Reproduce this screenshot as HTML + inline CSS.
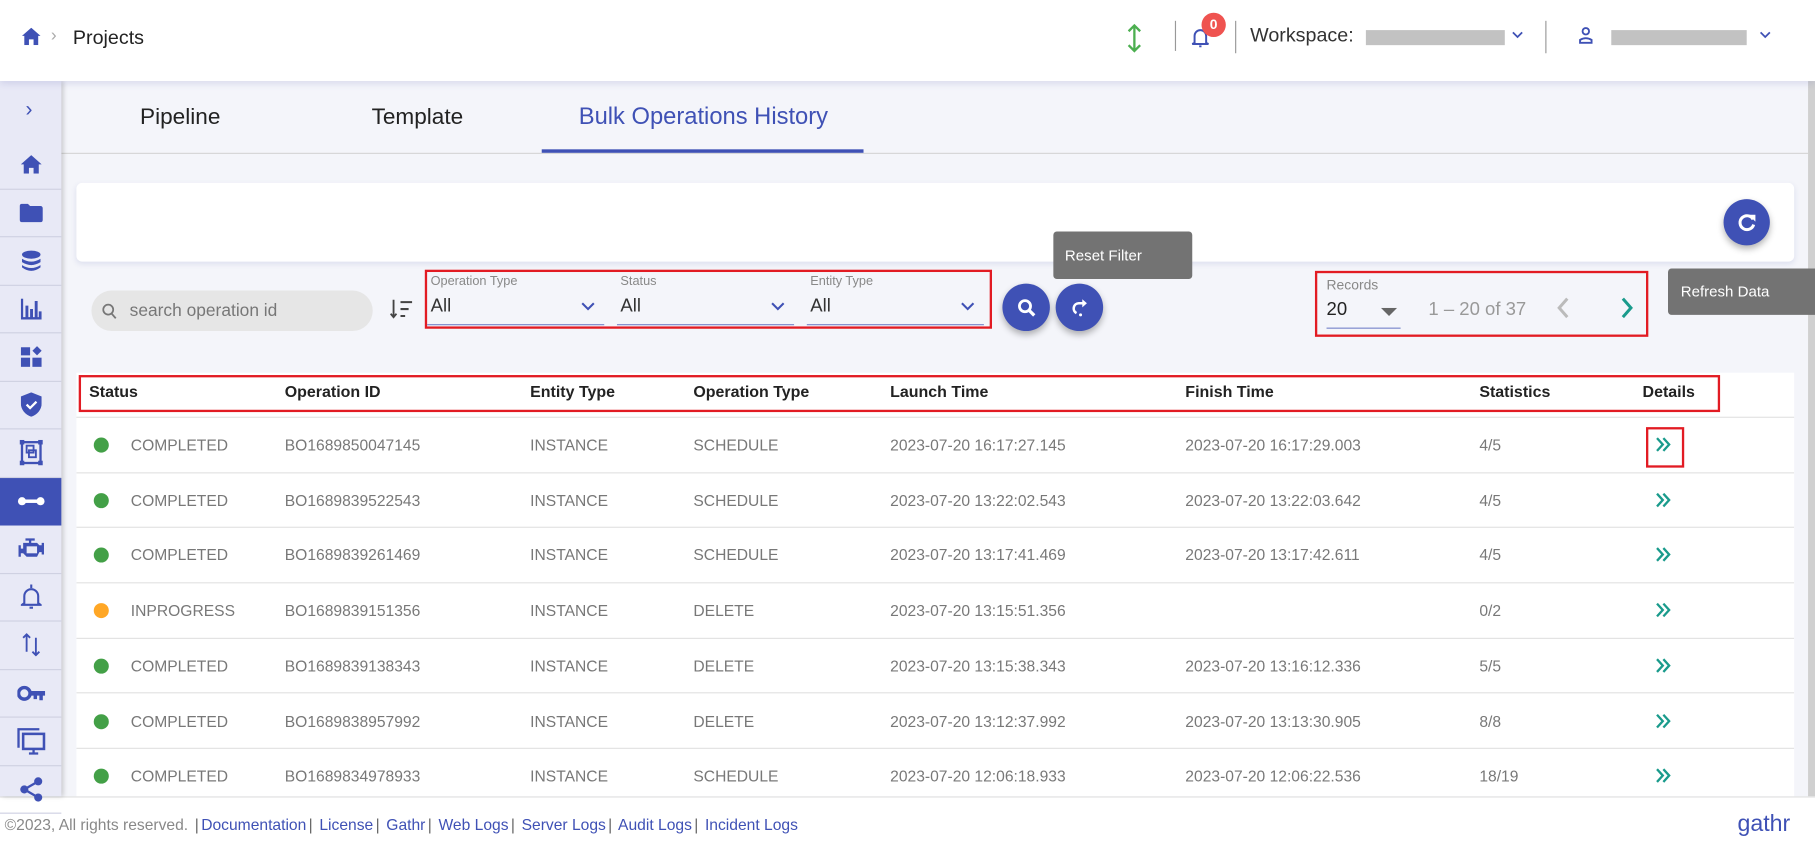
<!DOCTYPE html>
<html><head><meta charset="utf-8">
<style>
html,body{margin:0;padding:0;width:1815px;height:854px;overflow:hidden;background:#fff}
#w{position:absolute;left:0;top:0;width:1568px;height:738px;transform:scale(1.15753);transform-origin:0 0;font-family:"Liberation Sans",sans-serif;background:#f4f5fa;overflow:hidden}
.a{position:absolute}
.hdr{left:0;top:0;width:1568px;height:70px;background:#fff;box-shadow:0 2px 6px rgba(60,70,160,.15);z-index:3}
.side{left:0;top:70px;width:53px;height:618px;background:#e8e9f6;box-shadow:2px 0 4px rgba(0,0,0,.18);z-index:2}
.si{position:absolute;left:0;width:53px;height:41.5px;border-bottom:1px solid #cfd1e2;box-sizing:border-box;display:flex;align-items:center;justify-content:center}
.t{font-size:19.5px;color:#222;top:90px}
.card{left:66px;top:158px;width:1484px;height:68px;background:#fff;border-radius:5px;box-shadow:0 2px 5px rgba(60,70,160,.12)}
.circ{border-radius:50%;background:#3f51b5;box-shadow:0 3px 6px rgba(0,0,0,.3);display:flex;align-items:center;justify-content:center}
.tip{background:#737373;color:#fff;font-size:13px;border-radius:3px}
.sel{position:absolute;top:0;height:50px;width:150px}
.sel .l{position:absolute;top:3px;left:3px;font-size:11px;color:#888}
.sel .v{position:absolute;top:22px;left:3px;font-size:16px;color:#333}
.sel .u{position:absolute;left:0;right:0;top:46px;height:1px;background:#7986cb}
.sel svg{position:absolute;right:8px;top:27px}
.tbl{left:66px;top:322px;width:1484px;height:366px;background:#fff}
.row{position:absolute;left:0;width:1484px;height:47.7px;border-bottom:1px solid #e2e2e2;font-size:13.5px;color:#787878}
.row span,.hd span{position:absolute;top:17px;white-space:nowrap}
.hd{position:absolute;left:0;top:0;width:1484px;height:38px;border-bottom:1px solid #e2e2e2;font-size:13.8px;font-weight:bold;color:#222}
.hd span{top:9px}
.dot{position:absolute;left:15px;top:18px;width:13px;height:13px;border-radius:50%;background:#43a047}
.ch{position:absolute;left:1364px;top:17px}
.ft{left:0;top:688px;width:1568px;height:50px;background:#fff;border-top:1px solid #e0e0e0;font-size:13.5px}
.ft a{color:#3f51b5;text-decoration:none}
.ft .s{color:#666;margin:0 2px}
</style></head><body><div id="w">
<div class="a hdr">
 <svg class="a" style="left:19px;top:24px" width="16" height="15" viewBox="0 0 16 15"><path d="M8 0L0 7h2v8h4v-5h4v5h4V7h2z" fill="#3f51b5"/></svg>
 <div class="a" style="left:44px;top:22px;color:#aaa;font-size:15px">›</div>
 <div class="a" style="left:63px;top:23px;font-size:17px;color:#222">Projects</div>
 <svg class="a" style="left:972px;top:20px" width="16" height="26" viewBox="0 0 16 26"><path d="M8 2v22M3 7l5-5 5 5M3 19l5 5 5-5" stroke="#4caf50" stroke-width="2" fill="none"/></svg>
 <div class="a" style="left:1015px;top:18px;width:1px;height:26px;background:#999"></div>
 <svg class="a" style="left:1029px;top:20px" width="16" height="24" viewBox="0 0 16 24"><path d="M3 17V11a5 5 0 0 1 10 0v6l2 1H1z M7 20h2" stroke="#3f51b5" stroke-width="1.7" fill="none"/></svg>
 <div class="a" style="left:1038px;top:11px;width:21px;height:21px;border-radius:50%;background:#ef5350;color:#fff;font-size:12px;font-weight:bold;text-align:center;line-height:21px">0</div>
 <div class="a" style="left:1067px;top:18px;width:1px;height:28px;background:#999"></div>
 <div class="a" style="left:1080px;top:21px;font-size:17px;color:#333">Workspace:</div>
 <div class="a" style="left:1180px;top:26px;width:120px;height:13px;background:#c2c2c2"></div>
 <svg class="a" style="left:1306px;top:27px" width="10" height="7"><path d="M1 1l4 4 4-4" stroke="#3f51b5" stroke-width="1.5" fill="none"/></svg>
 <div class="a" style="left:1335px;top:18px;width:1px;height:28px;background:#999"></div>
 <svg class="a" style="left:1364px;top:23px" width="12" height="16" viewBox="0 0 12 16"><circle cx="6" cy="4" r="2.8" stroke="#3f51b5" stroke-width="1.6" fill="none"/><path d="M1 14v-2.5q5-3 10 0V14z" stroke="#3f51b5" stroke-width="1.6" fill="none"/></svg>
 <div class="a" style="left:1392px;top:26px;width:117px;height:13px;background:#c2c2c2"></div>
 <svg class="a" style="left:1520px;top:27px" width="10" height="7"><path d="M1 1l4 4 4-4" stroke="#3f51b5" stroke-width="1.5" fill="none"/></svg>
</div>

<div class="a side">
 <div class="a" style="left:22px;top:14px;color:#3f51b5;font-size:18px">›</div>
 <div class="si" style="top:52px"><svg width="18" height="16" viewBox="0 0 18 16"><path d="M9 0L0 8h2.5v8h4.5v-5h4v5h4.5V8H18z" fill="#3f51b5"/></svg></div>
 <div class="si" style="top:93.5px"><svg width="20" height="16"><path d="M0 2a2 2 0 0 1 2-2h5l2 2h9a2 2 0 0 1 2 2v10a2 2 0 0 1-2 2H2a2 2 0 0 1-2-2z" fill="#3f51b5"/></svg></div>
 <div class="si" style="top:135px"><svg width="18" height="19"><ellipse cx="9" cy="4" rx="8" ry="3.5" fill="#3f51b5"/><path d="M1 7.5q8 5 16 0v3q-8 5-16 0zM1 13q8 5 16 0v2q-8 6-16 0z" fill="#3f51b5"/></svg></div>
 <div class="si" style="top:176.5px"><svg width="18" height="18"><path d="M0 0h2v16h16v2H0zM4 6h2.5v10H4zM8 9h2.5v7H8zM12 2h2.5v14H12zM15.5 11H18v5h-2.5z" fill="#3f51b5"/></svg></div>
 <div class="si" style="top:218px"><svg width="18" height="18"><rect x="0" y="1" width="8" height="7" fill="#3f51b5"/><rect x="0" y="10" width="8" height="8" fill="#3f51b5"/><rect x="10" y="10" width="8" height="8" fill="#3f51b5"/><path d="M14 0l4 4-4 4-4-4z" fill="#3f51b5"/></svg></div>
 <div class="si" style="top:259.5px"><svg width="18" height="21"><path d="M9 0L0 3.5v6c0 5.5 4 10 9 11.5 5-1.5 9-6 9-11.5v-6z" fill="#3f51b5"/><path d="M5 10.5l3 3 5.5-5.5" stroke="#fff" stroke-width="2" fill="none"/></svg></div>
 <div class="si" style="top:301px"><svg width="20" height="22"><rect x="2" y="2" width="16" height="18" stroke="#3f51b5" stroke-width="2" fill="none"/><rect x="6" y="5" width="6" height="6" stroke="#3f51b5" stroke-width="1.6" fill="none"/><rect x="8" y="9" width="6" height="6" stroke="#3f51b5" stroke-width="1.6" fill="none"/><rect x="0" y="0" width="4" height="4" fill="#3f51b5"/><rect x="16" y="0" width="4" height="4" fill="#3f51b5"/><rect x="0" y="18" width="4" height="4" fill="#3f51b5"/><rect x="16" y="18" width="4" height="4" fill="#3f51b5"/></svg></div>
 <div class="si" style="top:342.5px;background:#3f51b5;border:none"><svg width="24" height="10"><circle cx="4" cy="5" r="3.5" fill="#fff"/><circle cx="20" cy="5" r="3.5" fill="#fff"/><rect x="4" y="3.5" width="16" height="3" fill="#fff"/></svg></div>
 <div class="si" style="top:384px"><svg width="24" height="18"><path d="M7 0h8v2h-3v2h5l2 2h2v-2h2v10h-2v-2h-2l-2 4H8l-3-3H3v3H1V6h2v3h2V4h5V2H7z" fill="#3f51b5"/><rect x="8" y="7" width="9" height="6" fill="#e8e9f6"/></svg></div>
 <div class="si" style="top:425.5px"><svg width="18" height="22"><path d="M3 16V10a6 6 0 0 1 12 0v6l2 1.5H1z" stroke="#3f51b5" stroke-width="1.8" fill="none"/><path d="M7.5 20h3M9 0v3" stroke="#3f51b5" stroke-width="1.8"/></svg></div>
 <div class="si" style="top:467px"><svg width="16" height="20"><path d="M4 16V1M1 4l3-3 3 3M12 4v15M9 16l3 3 3-3" stroke="#3f51b5" stroke-width="1.6" fill="none"/></svg></div>
 <div class="si" style="top:508.5px"><svg width="24" height="14"><circle cx="6" cy="7" r="5" stroke="#3f51b5" stroke-width="3" fill="none"/><path d="M10 5h14v4h-2v4h-3V9h-2v3h-3V9h-4z" fill="#3f51b5"/></svg></div>
 <div class="si" style="top:550px"><svg width="26" height="24"><path d="M2 18V2h18" stroke="#3f51b5" stroke-width="2" fill="none"/><rect x="6" y="6" width="18" height="13" stroke="#3f51b5" stroke-width="2.2" fill="none"/><path d="M15 19v3M11 23h8" stroke="#3f51b5" stroke-width="2"/></svg></div>
 <div class="si" style="top:591.5px"><svg width="20" height="22"><circle cx="16" cy="4" r="3.5" fill="#3f51b5"/><circle cx="4" cy="11" r="3.5" fill="#3f51b5"/><circle cx="16" cy="18" r="3.5" fill="#3f51b5"/><path d="M16 4L4 11l12 7" stroke="#3f51b5" stroke-width="2" fill="none"/></svg></div>
</div>
<div class="a" style="left:1562px;top:70px;width:6px;height:618px;background:#d0d0d0"></div>

<div class="a t" style="left:121px">Pipeline</div>
<div class="a t" style="left:321px">Template</div>
<div class="a t" style="left:500px;color:#3f51b5;font-size:20.5px;top:89px">Bulk Operations History</div>
<div class="a" style="left:53px;top:132px;width:1509px;height:1px;background:#d6d6d6"></div>
<div class="a" style="left:468px;top:129px;width:278px;height:3px;background:#3f51b5"></div>

<div class="a card"></div>
<div class="a circ" style="left:1489px;top:172px;width:40px;height:40px"><svg width="18" height="18" viewBox="0 0 18 18"><path d="M14.5 6.5A6 6 0 1 0 15 11" stroke="#fff" stroke-width="2.6" fill="none"/><path d="M10.5 2.5h6v6z" fill="#fff"/></svg></div>
<div class="a tip" style="left:910px;top:200px;width:120px;height:41px;line-height:41px;padding-left:10px;box-sizing:border-box">Reset Filter</div>

<div class="a" style="left:79px;top:251px;width:243px;height:35px;border-radius:18px;background:#e6e6e6"></div>
<svg class="a" style="left:88px;top:262px" width="13" height="14"><circle cx="5.5" cy="5.5" r="4.3" stroke="#777" stroke-width="1.5" fill="none"/><path d="M8.5 9l3.5 4" stroke="#777" stroke-width="1.6"/></svg>
<div class="a" style="left:112px;top:260px;font-size:15px;color:#777">search operation id</div>
<svg class="a" style="left:337px;top:258px" width="20" height="18"><path d="M3 1v15M0.5 13l2.5 3 2.5-3" stroke="#444" stroke-width="1.6" fill="none"/><path d="M9 3h10M9 9h7M9 15h4" stroke="#444" stroke-width="1.8"/></svg>

<div class="a" style="left:367px;top:233px;width:490px;height:51px;border:2px solid #e21b23;box-sizing:border-box"></div>
<div class="a" style="left:369px;top:234px;width:486px;height:50px">
 <div class="sel" style="left:0;width:153px"><div class="l">Operation Type</div><div class="v">All</div><svg width="12" height="8"><path d="M1 1l5 5 5-5" stroke="#3f51b5" stroke-width="1.8" fill="none"/></svg><div class="u"></div></div>
 <div class="sel" style="left:164px;width:153px"><div class="l">Status</div><div class="v">All</div><svg width="12" height="8"><path d="M1 1l5 5 5-5" stroke="#3f51b5" stroke-width="1.8" fill="none"/></svg><div class="u"></div></div>
 <div class="sel" style="left:328px;width:153px"><div class="l">Entity Type</div><div class="v">All</div><svg width="12" height="8"><path d="M1 1l5 5 5-5" stroke="#3f51b5" stroke-width="1.8" fill="none"/></svg><div class="u"></div></div>
</div>
<div class="a circ" style="left:866px;top:245px;width:41px;height:41px"><svg width="16" height="16"><circle cx="6.5" cy="6.5" r="4.8" stroke="#fff" stroke-width="2.4" fill="none"/><path d="M10 10l4.5 4.5" stroke="#fff" stroke-width="2.8"/></svg></div>
<div class="a circ" style="left:912px;top:245px;width:41px;height:41px"><svg width="16" height="18"><path d="M11.5 5H7a4.5 4.5 0 0 0-2 8.5" stroke="#fff" stroke-width="2.2" fill="none"/><path d="M10 1.5l4 3.5-4 3.5z" fill="#fff"/><circle cx="8.5" cy="15" r="1.3" fill="#fff"/></svg></div>

<div class="a" style="left:1136px;top:234px;width:288px;height:57px;border:2px solid #e21b23;box-sizing:border-box"></div>
<div class="a" style="left:1146px;top:239px;font-size:12px;color:#888">Records</div>
<div class="a" style="left:1146px;top:259px;font-size:16px;color:#222">20</div>
<svg class="a" style="left:1193px;top:266px" width="14" height="7"><path d="M0 0h14L7 7z" fill="#666"/></svg>
<div class="a" style="left:1146px;top:283px;width:64px;height:1px;background:#7986cb"></div>
<div class="a" style="left:1234px;top:259px;font-size:16px;color:#999">1 – 20 of 37</div>
<svg class="a" style="left:1344px;top:256px" width="12" height="20"><path d="M10 2L3 10l7 8" stroke="#bbb" stroke-width="2.6" fill="none"/></svg>
<svg class="a" style="left:1400px;top:256px" width="12" height="20"><path d="M2 2l7 8-7 8" stroke="#1a9b8c" stroke-width="2.6" fill="none"/></svg>
<div class="a tip" style="left:1441px;top:232px;width:130px;height:40px;line-height:40px;padding-left:11px;box-sizing:border-box">Refresh Data</div>

<div class="a tbl">
 <div class="hd"><span style="left:11px">Status</span><span style="left:180px">Operation ID</span><span style="left:392px">Entity Type</span><span style="left:533px">Operation Type</span><span style="left:703px">Launch Time</span><span style="left:958px">Finish Time</span><span style="left:1212px">Statistics</span><span style="left:1353px">Details</span></div>
</div>
<div class="a" style="left:68px;top:324px;width:1418px;height:32px;border:2px solid #e21b23;box-sizing:border-box"></div>
<div class="a" style="left:66px;top:360px;width:1484px;height:330px;overflow:hidden">
 <div class="row" style="top:0"><div class="dot"></div><span style="left:47px">COMPLETED</span><span style="left:180px">BO1689850047145</span><span style="left:392px">INSTANCE</span><span style="left:533px">SCHEDULE</span><span style="left:703px">2023-07-20 16:17:27.145</span><span style="left:958px">2023-07-20 16:17:29.003</span><span style="left:1212px">4/5</span><svg class="ch" width="14" height="14"><path d="M1.5 1.5l5 5.5-5 5.5M7 1.5l5 5.5-5 5.5" stroke="#1a9b8c" stroke-width="2" fill="none"/></svg></div>
 <div class="row" style="top:47.7px"><div class="dot"></div><span style="left:47px">COMPLETED</span><span style="left:180px">BO1689839522543</span><span style="left:392px">INSTANCE</span><span style="left:533px">SCHEDULE</span><span style="left:703px">2023-07-20 13:22:02.543</span><span style="left:958px">2023-07-20 13:22:03.642</span><span style="left:1212px">4/5</span><svg class="ch" width="14" height="14"><path d="M1.5 1.5l5 5.5-5 5.5M7 1.5l5 5.5-5 5.5" stroke="#1a9b8c" stroke-width="2" fill="none"/></svg></div>
 <div class="row" style="top:95.4px"><div class="dot"></div><span style="left:47px">COMPLETED</span><span style="left:180px">BO1689839261469</span><span style="left:392px">INSTANCE</span><span style="left:533px">SCHEDULE</span><span style="left:703px">2023-07-20 13:17:41.469</span><span style="left:958px">2023-07-20 13:17:42.611</span><span style="left:1212px">4/5</span><svg class="ch" width="14" height="14"><path d="M1.5 1.5l5 5.5-5 5.5M7 1.5l5 5.5-5 5.5" stroke="#1a9b8c" stroke-width="2" fill="none"/></svg></div>
 <div class="row" style="top:143.1px"><div class="dot" style="background:#ffa726"></div><span style="left:47px">INPROGRESS</span><span style="left:180px">BO1689839151356</span><span style="left:392px">INSTANCE</span><span style="left:533px">DELETE</span><span style="left:703px">2023-07-20 13:15:51.356</span><span style="left:1212px">0/2</span><svg class="ch" width="14" height="14"><path d="M1.5 1.5l5 5.5-5 5.5M7 1.5l5 5.5-5 5.5" stroke="#1a9b8c" stroke-width="2" fill="none"/></svg></div>
 <div class="row" style="top:190.8px"><div class="dot"></div><span style="left:47px">COMPLETED</span><span style="left:180px">BO1689839138343</span><span style="left:392px">INSTANCE</span><span style="left:533px">DELETE</span><span style="left:703px">2023-07-20 13:15:38.343</span><span style="left:958px">2023-07-20 13:16:12.336</span><span style="left:1212px">5/5</span><svg class="ch" width="14" height="14"><path d="M1.5 1.5l5 5.5-5 5.5M7 1.5l5 5.5-5 5.5" stroke="#1a9b8c" stroke-width="2" fill="none"/></svg></div>
 <div class="row" style="top:238.5px"><div class="dot"></div><span style="left:47px">COMPLETED</span><span style="left:180px">BO1689838957992</span><span style="left:392px">INSTANCE</span><span style="left:533px">DELETE</span><span style="left:703px">2023-07-20 13:12:37.992</span><span style="left:958px">2023-07-20 13:13:30.905</span><span style="left:1212px">8/8</span><svg class="ch" width="14" height="14"><path d="M1.5 1.5l5 5.5-5 5.5M7 1.5l5 5.5-5 5.5" stroke="#1a9b8c" stroke-width="2" fill="none"/></svg></div>
 <div class="row" style="top:286.2px"><div class="dot"></div><span style="left:47px">COMPLETED</span><span style="left:180px">BO1689834978933</span><span style="left:392px">INSTANCE</span><span style="left:533px">SCHEDULE</span><span style="left:703px">2023-07-20 12:06:18.933</span><span style="left:958px">2023-07-20 12:06:22.536</span><span style="left:1212px">18/19</span><svg class="ch" width="14" height="14"><path d="M1.5 1.5l5 5.5-5 5.5M7 1.5l5 5.5-5 5.5" stroke="#1a9b8c" stroke-width="2" fill="none"/></svg></div>
</div>
<div class="a" style="left:1422px;top:369px;width:33px;height:35px;border:2px solid #e21b23;box-sizing:border-box"></div>

<div class="a ft">
 <div class="a" style="left:4px;top:16px;white-space:nowrap"><span style="color:#888">©2023, All rights reserved.</span> <span class="s">|</span><a>Documentation</a><span class="s">|</span> <a>License</a><span class="s">|</span> <a>Gathr</a><span class="s">|</span> <a>Web Logs</a><span class="s">|</span> <a>Server Logs</a><span class="s">|</span> <a>Audit Logs</a><span class="s">|</span> <a>Incident Logs</a></div>
 <div class="a" style="left:1501px;top:12px;font-size:20px;color:#3f51b5">gathr</div>
</div>
</div></body></html>
